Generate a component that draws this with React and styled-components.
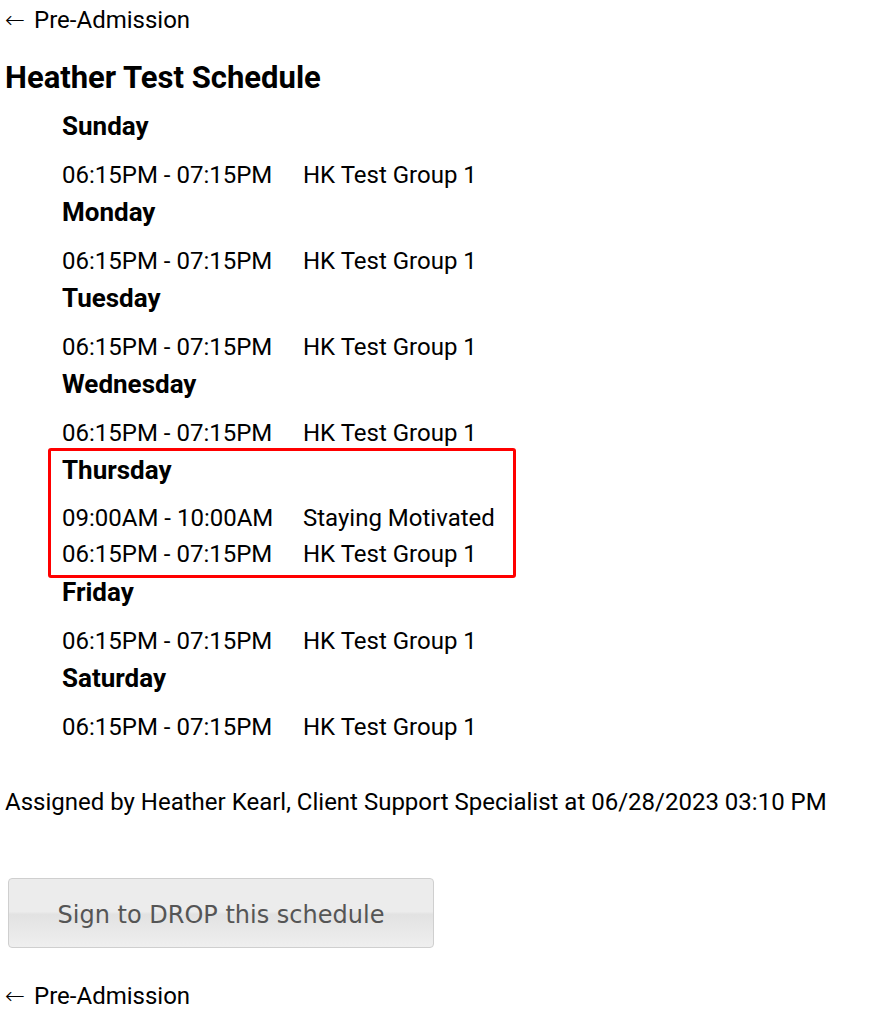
import React from "react";
import styled, { createGlobalStyle } from "styled-components";

const GlobalStyle = createGlobalStyle`
  body {
    margin: 0;
    background: #fff;
    color: #000;
    font-family: Roboto, "Liberation Sans", sans-serif;
  }
`;

const days = [
  { name: "Sunday", rows: [["06:15PM - 07:15PM", "HK Test Group 1"]] },
  { name: "Monday", rows: [["06:15PM - 07:15PM", "HK Test Group 1"]] },
  { name: "Tuesday", rows: [["06:15PM - 07:15PM", "HK Test Group 1"]] },
  { name: "Wednesday", rows: [["06:15PM - 07:15PM", "HK Test Group 1"]] },
  {
    name: "Thursday",
    highlight: true,
    rows: [
      ["09:00AM - 10:00AM", "Staying Motivated"],
      ["06:15PM - 07:15PM", "HK Test Group 1"],
    ],
  },
  { name: "Friday", rows: [["06:15PM - 07:15PM", "HK Test Group 1"]] },
  { name: "Saturday", rows: [["06:15PM - 07:15PM", "HK Test Group 1"]] },
];

const App = () => {
  return (
    <Page>
      <GlobalStyle />
      <BackLink href="#">
        <Arrow>←</Arrow> Pre-Admission
      </BackLink>
      <Title>Heather Test Schedule</Title>
      <Schedule>
        {days.map((day) => (
          <Day key={day.name} $highlight={day.highlight}>
            <DayName $highlight={day.highlight}>{day.name}</DayName>
            <Rows>
              {day.rows.map(([time, group], i) => (
                <Row key={i}>
                  <Time>{time}</Time>
                  <Group>{group}</Group>
                </Row>
              ))}
            </Rows>
          </Day>
        ))}
      </Schedule>
      <Assigned>
        Assigned by Heather Kearl, Client Support Specialist at 06/28/2023 03:10 PM
      </Assigned>
      <DropButton type="button">Sign to DROP this schedule</DropButton>
      <BackLink href="#" $bottom>
        <Arrow>←</Arrow> Pre-Admission
      </BackLink>
    </Page>
  );
};

const Page = styled.div`
  display: flex;
  flex-direction: column;
  align-items: flex-start;
  padding: 4px 5px 20px;
`;

const BackLink = styled.a`
  font-size: 24px;
  line-height: 32px;
  color: #000;
  text-decoration: none;
  margin-top: ${(p) => (p.$bottom ? "32px" : "0")};
`;

const Arrow = styled.span`
  font-family: "DejaVu Sans", sans-serif;
  font-weight: 300;
  margin-right: 3px;
`;

const Title = styled.h2`
  margin: 24px 0 11px;
  font-size: 31px;
  line-height: 36px;
  font-weight: 700;
`;

const Schedule = styled.div`
  display: flex;
  flex-direction: column;
  margin-left: 43px;
`;

const Day = styled.div`
  width: 468px;
  box-sizing: border-box;
  padding: ${(p) => (p.$highlight ? "0 11px 3px" : "0 11px")};
  border: 3px solid ${(p) => (p.$highlight ? "#ff0000" : "transparent")};
  border-radius: 3px;
  margin: ${(p) => (p.$highlight ? "-3px 0 -5px" : "-3px 0")};
`;

const DayName = styled.div`
  font-size: 26px;
  line-height: 38px;
  font-weight: 700;
  margin-bottom: ${(p) => (p.$highlight ? "11px" : "12px")};
`;

const Rows = styled.div`
  display: flex;
  flex-direction: column;
`;

const Row = styled.div`
  display: grid;
  grid-template-columns: 241px auto;
  font-size: 24px;
  line-height: 36px;
  white-space: nowrap;
`;

const Time = styled.span``;

const Group = styled.span``;

const Assigned = styled.p`
  margin: 41px 0 0;
  font-size: 24px;
  line-height: 32px;
`;

const DropButton = styled.button`
  margin: 60px 0 0 3px;
  padding: 4px 0 0;
  width: 426px;
  height: 70px;
  border: 1px solid #cfcfcf;
  border-radius: 4px;
  background: linear-gradient(to bottom, #ececec 0%, #ececec 48%, #e2e2e2 52%, #efefef 100%);
  color: #555;
  font-family: "DejaVu Sans", Verdana, sans-serif;
  font-size: 24px;
  cursor: pointer;
`;

export default App;
